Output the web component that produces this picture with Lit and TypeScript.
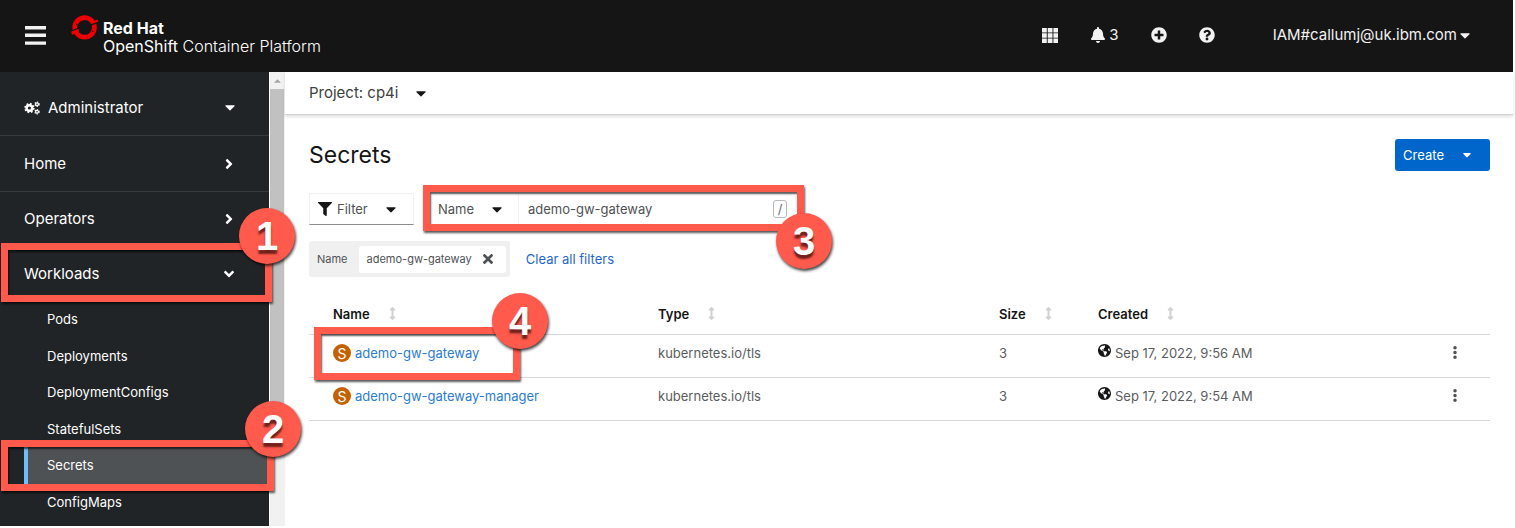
import { LitElement, html, css, svg, nothing } from "lit";
import { customElement, property } from "lit/decorators.js";

type Glyph = { box: string; d: string };

const GLYPHS: Record<string, Glyph> = {
  caret: { box: "0 160 320 216", d: "M31.3 192h257.3c17.8 0 26.7 21.5 14.1 34.1L174.1 354.8c-7.8 7.8-20.5 7.8-28.3 0L17.2 226.1C4.6 213.5 13.5 192 31.3 192z" },
  filter: { box: "0 0 512 512", d: "M487.976 0H24.028C2.71 0-8.047 25.866 7.058 40.971L192 225.941V432c0 7.831 3.821 15.17 10.237 19.662l80 55.98C298.02 518.69 320 507.493 320 487.98V225.941l184.947-184.97C520.021 25.896 509.338 0 487.976 0z" },
  bell: { box: "0 0 448 512", d: "M224 512c35.32 0 63.97-28.65 63.97-64H160.03c0 35.35 28.65 64 63.97 64zm215.39-149.71c-19.32-20.76-55.47-51.99-55.47-154.29 0-77.7-54.48-139.9-127.94-155.16V32c0-17.67-14.32-32-31.98-32s-31.98 14.33-31.98 32v20.84C118.56 68.1 64.08 130.3 64.08 208c0 102.3-36.15 133.53-55.47 154.29-6 6.45-8.66 14.16-8.61 21.71.11 16.4 12.98 32 32.1 32h383.8c19.12 0 32-15.6 32.1-32 .05-7.55-2.61-15.27-8.61-21.71z" },
  plus: { box: "0 0 512 512", d: "M256 8C119 8 8 119 8 256s111 248 248 248 248-111 248-248S393 8 256 8zm144 276c0 6.6-5.4 12-12 12h-92v92c0 6.6-5.4 12-12 12h-56c-6.6 0-12-5.4-12-12v-92h-92c-6.6 0-12-5.4-12-12v-56c0-6.6 5.4-12 12-12h92v-92c0-6.6 5.4-12 12-12h56c6.6 0 12 5.4 12 12v92h92c6.6 0 12 5.4 12 12v56z" },
  help: { box: "0 0 512 512", d: "M504 256c0 136.997-111.043 248-248 248S8 392.997 8 256C8 119.083 119.043 8 256 8s248 111.083 248 248zM262.655 90c-54.497 0-89.255 22.957-116.549 63.758-3.536 5.286-2.353 12.415 2.715 16.258l34.699 26.31c5.205 3.947 12.621 3.008 16.665-2.122 17.864-22.658 30.113-35.797 57.303-35.797 20.429 0 45.698 13.148 45.698 32.958 0 14.976-12.363 22.667-32.534 33.976C247.128 238.528 216 254.941 216 296v4c0 6.627 5.373 12 12 12h56c6.627 0 12-5.373 12-12v-1.333c0-28.462 83.186-29.647 83.186-106.667 0-58.002-60.165-102-116.531-102zM256 338c-25.365 0-46 20.635-46 46 0 25.364 20.635 46 46 46s46-20.636 46-46c0-25.365-20.635-46-46-46z" },
  right: { box: "0 0 256 512", d: "M224.3 273l-136 136c-9.4 9.4-24.6 9.4-33.9 0l-22.6-22.6c-9.4-9.4-9.4-24.6 0-33.9l96.4-96.4-96.4-96.4c-9.4-9.4-9.4-24.6 0-33.9L54.3 103c9.4-9.4 24.6-9.4 33.9 0l136 136c9.5 9.4 9.5 24.6.1 34z" },
  down: { box: "0 0 320 512", d: "M143 352.3L7 216.3c-9.4-9.4-9.4-24.6 0-33.9l22.6-22.6c9.4-9.4 24.6-9.4 33.9 0l96.4 96.4 96.4-96.4c9.4-9.4 24.6-9.4 33.9 0l22.6 22.6c9.4 9.4 9.4 24.6 0 33.9l-136 136c-9.2 9.4-24.4 9.4-33.8 0z" },
  times: { box: "0 80 352 352", d: "M242.72 256l100.07-100.07c12.28-12.28 12.28-32.19 0-44.48l-22.24-22.24c-12.28-12.28-32.19-12.28-44.48 0L176 189.28 75.93 89.21c-12.28-12.28-32.19-12.28-44.48 0L9.21 111.45c-12.28 12.28-12.28 32.19 0 44.48L109.28 256 9.21 356.07c-12.28 12.28-12.28 32.19 0 44.48l22.24 22.24c12.28 12.28 32.2 12.28 44.48 0L176 322.72l100.07 100.07c12.28 12.28 32.2 12.28 44.48 0l22.24-22.24c12.28-12.28 12.28-32.19 0-44.48L242.72 256z" },
  globe: { box: "0 8 496 496", d: "M248 8C111.03 8 0 119.03 0 256s111.03 248 248 248 248-111.03 248-248S384.97 8 248 8zm82.29 357.6c-3.9 3.88-7.99 7.95-11.31 11.28-2.99 3-5.1 6.7-6.17 10.71-1.51 5.66-2.73 11.38-4.77 16.87l-17.39 46.85c-13.76 3-28 4.69-42.65 4.69v-27.38c1.69-12.62-7.64-36.26-22.63-51.25-6-6-9.37-14.14-9.37-22.63v-32.01c0-11.64-6.27-22.34-16.46-27.97-14.37-7.95-34.81-19.06-48.81-26.11-11.48-5.78-22.1-13.14-31.65-21.75l-.8-.72a114.792 114.792 0 0 1-18.06-20.74c-9.38-13.77-24.66-36.42-34.59-51.14 20.47-45.5 57.36-82.04 103.2-101.89l24.01 12.01C203.48 89.74 216 82.01 216 70.11v-11.3c7.99-1.29 16.12-2.11 24.39-2.42l28.3 28.3c6.25 6.25 6.25 16.38 0 22.63L264 112l-10.34 10.34c-3.12 3.12-3.12 8.19 0 11.31l4.69 4.69c3.12 3.12 3.12 8.19 0 11.31l-8 8a8.008 8.008 0 0 1-5.66 2.34h-8.99c-2.08 0-4.08.81-5.58 2.27l-9.92 9.65a8.008 8.008 0 0 0-1.58 9.31l15.59 31.19c2.66 5.32-1.21 11.58-7.15 11.58h-5.64c-1.93 0-3.79-.7-5.24-1.96l-9.28-8.06a16.017 16.017 0 0 0-15.55-3.1l-31.17 10.39a11.95 11.95 0 0 0-8.17 11.34c0 4.53 2.56 8.66 6.61 10.69l11.08 5.54c9.41 4.71 19.79 7.16 30.31 7.16s22.59 27.29 32 32h66.75c8.49 0 16.62 3.37 22.63 9.37l13.69 13.69a30.503 30.503 0 0 1 8.93 21.57 46.536 46.536 0 0 1-13.72 32.98zM417 274.25c-5.79-1.45-10.84-5-14.15-9.97l-17.98-26.97a23.97 23.97 0 0 1 0-26.62l19.59-29.38c2.32-3.47 5.5-6.29 9.24-8.15l12.98-6.49C440.2 193.59 448 223.87 448 256c0 8.67-.74 17.16-1.82 25.54L417 274.25z" },
  sort: { box: "0 0 256 512", d: "M214.059 377.941H168V134.059h46.059c21.382 0 32.09-25.851 16.971-40.971L144.97 7.029c-9.373-9.373-24.568-9.373-33.941 0L24.971 93.088c-15.119 15.119-4.411 40.971 16.971 40.971H88v243.882H41.941c-21.382 0-32.09 25.851-16.971 40.971l86.059 86.059c9.373 9.373 24.568 9.373 33.941 0l86.059-86.059c15.12-15.119 4.412-40.971-16.97-40.971z" },
  grid: { box: "0 0 16 15", d: "M0 0h4.8v4.4H0zM5.7 0h4.8v4.4H5.7zM11.4 0h4.6v4.4h-4.6zM0 5.3h4.8v4.4H0zM5.7 5.3h4.8v4.4H5.7zM11.4 5.3h4.6v4.4h-4.6zM0 10.6h4.8V15H0zM5.7 10.6h4.8V15H5.7zM11.4 10.6h4.6V15h-4.6z" },
  bars: { box: "0 0 21 19", d: "M0 0h21v3.4H0zM0 7.6h21V11H0zM0 15.4h21v3.4H0z" },
  kebab: { box: "0 0 4 14", d: "M2 0a1.9 1.9 0 1 0 0 3.8a1.9 1.9 0 1 0 0-3.8zM2 5.1a1.9 1.9 0 1 0 0 3.8a1.9 1.9 0 1 0 0-3.8zM2 10.2a1.9 1.9 0 1 0 0 3.8a1.9 1.9 0 1 0 0-3.8z" },
};

const icon = (name: string, cls: string) => html`
  <svg class="icon ${cls}" viewBox=${GLYPHS[name].box} aria-hidden="true"><path d=${GLYPHS[name].d}></path></svg>`;

const gear = (cx: number, cy: number, r: number, teeth: number, tooth: number) => {
  const step = (2 * Math.PI * r) / teeth;
  return svg`
    <circle cx=${cx} cy=${cy} r=${r * 0.68} fill="none" stroke="currentColor" stroke-width=${r * 0.6}></circle>
    <circle cx=${cx} cy=${cy} r=${r} fill="none" stroke="currentColor" stroke-width=${tooth}
      stroke-dasharray="${step / 2} ${step / 2}"></circle>`;
};

/* Red outlined frame with a numbered badge, drawn over the console. */
@customElement("step-callout")
export class StepCallout extends LitElement {
  @property({ type: Number }) step = 0;

  static styles = css`
    :host { display: block; box-sizing: border-box; position: absolute; pointer-events: none; z-index: 2;
      border: 7px solid #ff5a4c; box-shadow: 1px 2px 2px rgba(0, 0, 0, .65), inset 1px 2px 2px rgba(0, 0, 0, .65); }
    .badge { position: absolute; width: 56px; height: 56px; border-radius: 50%; background: #ff5a4c; color: #fff;
      display: grid; place-items: center; font: bold 40px/56px "Liberation Sans", Arial, sans-serif;
      text-shadow: 0 4px 2px #6e211b; box-shadow: 1px 2px 3px rgba(0, 0, 0, .75);
      top: var(--badge-top); right: var(--badge-right); }
  `;

  render() {
    return html`<span class="badge">${this.step}</span>`;
  }
}

const SUB_ITEMS = ["Pods", "Deployments", "DeploymentConfigs", "StatefulSets", "Secrets", "ConfigMaps"];
const COLUMNS = ["Name", "Type", "Size", "Created"];
const SECRETS = [
  { name: "ademo-gw-gateway", type: "kubernetes.io/tls", size: 3, created: "Sep 17, 2022, 9:56 AM" },
  { name: "ademo-gw-gateway-manager", type: "kubernetes.io/tls", size: 3, created: "Sep 17, 2022, 9:54 AM" },
];

@customElement("app-root")
export class AppRoot extends LitElement {
  static styles = css`
    :host { display: flex; flex-direction: column; box-sizing: border-box; height: 100vh; padding: 0 2px 2px 0;
      overflow: hidden; background: #fff; color: #151515; font: 13px/20px Inter, "Open Sans", sans-serif; }
    * { box-sizing: border-box; }
    button, input, select { font: inherit; color: inherit; background: none; border: 0; padding: 0; margin: 0; }
    a { text-decoration: none; }
    .icon { display: block; fill: currentColor; flex: none; overflow: visible; }
    .caret { width: 10px; height: 7px; }
    .i14 { width: 14px; height: 14px; }
    .i16 { width: 16px; height: 16px; }

    .masthead { display: flex; align-items: center; flex: none; height: 72px; padding: 0 43px 2px 25px;
      background: #151515; color: #f2f2f2; }
    .bars { width: 21px; height: 19px; }
    .brand { display: flex; gap: 4px; margin-left: 25px; color: #fff; }
    .logo { width: 28px; height: 26px; }
    .brand-text { display: grid; padding-top: 4px; font-size: 16px; line-height: 18px; }
    .vendor { font-weight: 700; }
    .product { font-weight: 300; }
    .product b { font-weight: 400; }
    .tools { display: flex; align-items: center; margin-left: auto; font-size: 15px; }
    .tools button { display: flex; align-items: center; gap: 3px; }
    .launcher { width: 16px; height: 15px; }
    .launch, .alerts, .add { margin-right: 32px; }
    .ask { margin-right: 58px; }

    .body { display: flex; flex: 1; min-height: 0; }
    .sidebar { flex: none; width: 269px; background: #212427; color: #fff; font-size: 15px; }
    .section { display: flex; align-items: center; justify-content: space-between; width: 100%; height: 55px;
      padding: 0 34px 0 24px; border-bottom: 1px solid #36393d; text-align: left; }
    .perspective { height: 64px; padding-top: 8px; }
    .home { height: 56px; }
    .perspective .label { display: flex; align-items: center; gap: 8px; }
    .open { height: 54px; border-bottom: 0; }
    .cogs { width: 16px; height: 14px; }
    .angle { width: 12px; height: 16px; }
    .group { position: relative; }
    .subnav { display: grid; grid-template-rows: repeat(6, 1fr); height: 219px; margin: 0; padding: 0 0 0 24px;
      list-style: none; font-size: 13px; }
    .subnav li { position: relative; display: grid; }
    .subnav a { display: flex; align-items: center; padding-left: 19px; color: #fff; border-left: 4px solid transparent; }
    .subnav a.current { background: #4f5255; border-left-color: #73bcf7; }

    .scroll { flex: none; width: 16px; background: #f1f1f1; border-left: 1px solid #fff; }
    .scroll .arrow { display: grid; place-items: center; height: 17px; color: #a3a3a3; }
    .arrow svg { width: 7px; height: 4px; fill: currentColor; }
    .thumb { width: 14px; height: 344px; background: #c1c1c1; }

    .main { flex: 1; min-width: 0; }
    .project { display: flex; align-items: center; height: 43px; padding: 0 24px; border-bottom: 1px solid #d2d2d2;
      box-shadow: 0 2px 3px rgba(0, 0, 0, .12); color: #3c3f42; font-size: 15px; }
    .project button { display: flex; align-items: center; gap: 18px; }
    .project .caret { color: #151515; }
    .content { padding: 23px 23px 0 24px; }
    .title-row { display: flex; align-items: center; justify-content: space-between; height: 34px; }
    h1 { margin: 0; font-size: 23px; line-height: 30px; font-weight: 400; }
    .create { display: flex; align-items: center; gap: 19px; height: 32px; padding: 0 19px 0 8px; color: #fff;
      background: #06c; border-radius: 3px; }
    .create .caret { width: 8px; height: 6px; }
    .toolbar { display: flex; gap: 16px; margin-top: 21px; color: #4f5255; }
    .filter { display: flex; align-items: center; height: 32px; width: 105px; padding: 0 8px; gap: 5px;
      border: 1px solid #f0f0f0; border-bottom-color: #8a8d90; }
    .filter .caret, .pick .caret { color: #151515; margin-left: auto; margin-right: 9px; }
    .filter .i14 { color: #151515; }
    .search { position: relative; display: flex; height: 32px; width: 374px; border: 1px solid #f0f0f0; }
    .pick { display: grid; align-items: center; width: 88px; border-right: 1px solid #f0f0f0; }
    .pick > * { grid-area: 1 / 1; }
    .pick select { appearance: none; width: 100%; height: 30px; padding-left: 7px; outline: 0; }
    .pick .caret { justify-self: end; pointer-events: none; margin-right: 16px; }
    .search input { flex: 1; min-width: 0; padding-left: 9px; outline: 0; }
    .key { align-self: center; display: block; width: 14px; height: 18px; margin-right: 16px; text-align: center;
      border: 1px solid #b8bbbe; border-radius: 3px; font: inherit; font-size: 13px; line-height: 16px; color: #6a6e73; }
    .chips { display: flex; align-items: center; gap: 16px; margin-top: 16px; height: 36px; }
    .chip-group { display: flex; align-items: center; gap: 11px; height: 36px; padding: 0 4px 0 8px; background: #f0f0f0;
      border-radius: 3px; color: #4f5255; font-size: 11px; }
    .chip { display: flex; align-items: center; gap: 11px; height: 27px; padding: 0 13px 0 8px; background: #fff;
      border-radius: 3px; }
    .chip .icon { width: 10px; height: 10px; color: #4f5255; }
    .clear { color: #1f66cc; }

    table { width: 100%; margin-top: 17px; border-collapse: collapse; table-layout: fixed; }
    .col-name { width: 325px; }
    .col-type { width: 341px; }
    .col-size { width: 99px; }
    .col-menu { width: 61px; }
    th, td { height: 43px; padding: 0 0 6px 24px; text-align: left; border-bottom: 1px solid #d8d8d8; position: relative; }
    th { height: 40px; padding-bottom: 0; font-weight: 600; }
    td { color: #5a5d60; }
    th button { display: flex; align-items: center; gap: 19px; font-weight: 600; }
    .sort { width: 7px; height: 13px; color: #d2d2d2; }
    .cell { display: flex; align-items: center; gap: 4px; }
    .kind { display: grid; place-items: center; width: 18px; height: 18px; border-radius: 50%; background: #c46100;
      color: #fff; font-size: 14px; }
    .cell a { color: #2b7cd3; }
    .globe { width: 13px; height: 13px; margin-bottom: 4px; color: #151515; }
    .kebab { width: 4px; height: 13px; }
    .menu { display: block; color: #4f5255; }

    .c1 { inset: -4px -3px -1px 1px; --badge-top: -42px; --badge-right: -30px; }
    .c2 { inset: -7px -5px -7px -23px; --badge-top: -46px; --badge-right: -34px; }
    .c3 { inset: -9px -1px -7px -8px; --badge-top: 21px; --badge-right: -35px; }
    .c4 { left: 5px; top: -8px; width: 206px; height: 53px; --badge-top: -41px; --badge-right: -35px; }
  `;

  private section(label: string, cls = "") {
    const open = cls === "open";
    return html`<button class="section ${cls}" aria-expanded=${open}>
      <span>${label}</span>${icon(open ? "down" : "right", "angle")}
    </button>`;
  }

  render() {
    return html`
      <header class="masthead">
        <button aria-label="Toggle navigation">${icon("bars", "bars")}</button>
        <div class="brand">
          <svg class="logo" viewBox="0 0 28 26" aria-hidden="true">
            <circle cx="13.6" cy="12.4" r="9.8" fill="none" stroke="#e00" stroke-width="4.8"></circle>
            <path fill="#e00" d="M0 16.6l7.6-2.8.4 3.4-7 2.6zM20 7.4l6.4-2.9 1.2 2.6-7.2 2.8z"></path>
            <path fill="#151515" d="M0 15.4l8.4-3.2.3 1.3L.2 16.6zM19.4 9.4l8.4-3 .2 1.3-8.4 3.1z"></path>
            <path fill="#151515" d="M5.2 8.6l1.6.6-1.4 1.2zM21.6 15.2l1 1.2-1.8.6z"></path>
          </svg>
          <div class="brand-text">
            <span class="vendor">Red Hat</span>
            <span class="product"><b>OpenShift</b> Container Platform</span>
          </div>
        </div>
        <div class="tools">
          <button class="launch" aria-label="Applications">${icon("grid", "launcher")}</button>
          <button class="alerts" aria-label="Notifications">${icon("bell", "i16")}3</button>
          <button class="add" aria-label="Import">${icon("plus", "i16")}</button>
          <button class="ask" aria-label="Help">${icon("help", "i16")}</button>
          <button>IAM#callumj@uk.ibm.com${icon("caret", "caret")}</button>
        </div>
      </header>
      <div class="body">
        <nav class="sidebar" aria-label="Main">
          <button class="section perspective">
            <span class="label">
              <svg class="icon cogs" viewBox="0 0 16 14" aria-hidden="true">
                ${gear(5.4, 7, 4.2, 8, 2)}${gear(13, 3.2, 2.1, 6, 1.2)}${gear(13, 10.8, 2.1, 6, 1.2)}
              </svg>Administrator</span>${icon("caret", "caret")}
          </button>
          ${this.section("Home", "home")}${this.section("Operators")}
          <div class="group">
            ${this.section("Workloads", "open")}
            <step-callout class="c1" step="1"></step-callout>
          </div>
          <ul class="subnav">
            ${SUB_ITEMS.map((item) => html`<li>
              <a href="#${item}" class=${item === "Secrets" ? "current" : ""}>${item}</a>
              ${item === "Secrets" ? html`<step-callout class="c2" step="2"></step-callout>` : nothing}
            </li>`)}
          </ul>
        </nav>
        <div class="scroll" aria-hidden="true">
          <div class="arrow"><svg viewBox="0 0 8 4"><path d="M4 0l4 4H0z"></path></svg></div>
          <div class="thumb"></div>
        </div>
        <main class="main">
          <div class="project"><button>Project: cp4i${icon("caret", "caret")}</button></div>
          <div class="content">
            <div class="title-row">
              <h1>Secrets</h1>
              <button class="create">Create${icon("caret", "caret")}</button>
            </div>
            <div class="toolbar">
              <button class="filter">${icon("filter", "i14")}Filter${icon("caret", "caret")}</button>
              <div class="search">
                <div class="pick">
                  <select aria-label="Search by"><option>Name</option></select>
                  ${icon("caret", "caret")}
                </div>
                <input type="text" aria-label="Search term" .value=${"ademo-gw-gateway"}>
                <kbd class="key">/</kbd>
                <step-callout class="c3" step="3"></step-callout>
              </div>
            </div>
            <div class="chips">
              <div class="chip-group">Name
                <span class="chip">ademo-gw-gateway<button aria-label="Remove filter">${icon("times", "")}</button></span>
              </div>
              <button class="clear">Clear all filters</button>
            </div>
            <table>
              <colgroup><col class="col-name"><col class="col-type"><col class="col-size"><col><col class="col-menu"></colgroup>
              <thead><tr>
                ${COLUMNS.map((c) => html`<th scope="col"><button>${c}${icon("sort", "sort")}</button></th>`)}
                <th aria-label="Actions"></th>
              </tr></thead>
              <tbody>
                ${SECRETS.map((s, i) => html`<tr>
                  <td><span class="cell"><span class="kind">S</span><a href="#${s.name}">${s.name}</a></span>
                    ${i === 0 ? html`<step-callout class="c4" step="4"></step-callout>` : nothing}</td>
                  <td>${s.type}</td>
                  <td>${s.size}</td>
                  <td><span class="cell">${icon("globe", "globe")}${s.created}</span></td>
                  <td><button class="menu" aria-label="Actions">${icon("kebab", "kebab")}</button></td>
                </tr>`)}
              </tbody>
            </table>
          </div>
        </main>
      </div>`;
  }
}
